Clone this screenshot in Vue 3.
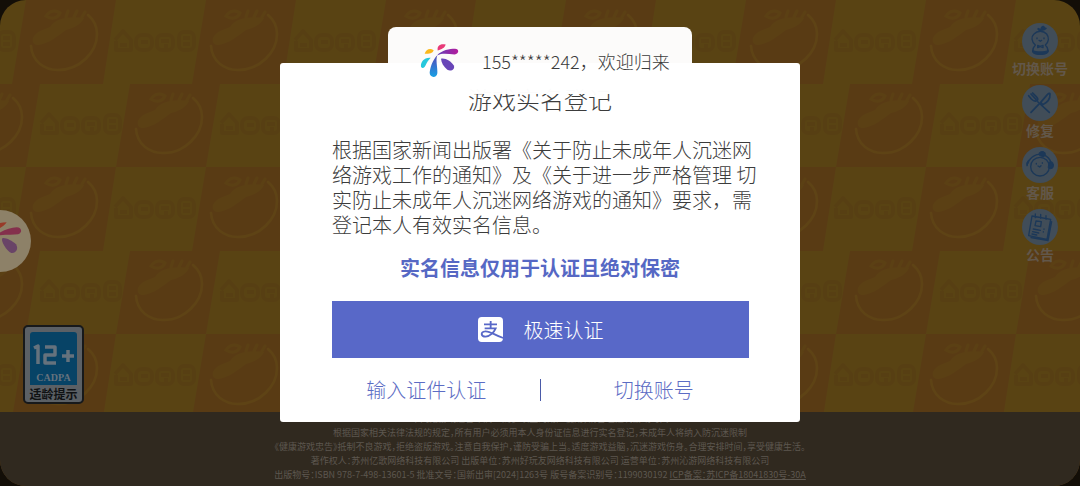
<script setup>
const copyText = [
  '根据国家新闻出版署《关于防止未成年人沉迷网',
  '络游戏工作的通知》及《关于进一步严格管理 切',
  '实防止未成年人沉迷网络游戏的通知》要求\uFF0C需',
  '登记本人有效实名信息。',
].join('\n')

const legalLines = [
  '本网络游戏适合年满12周岁以上的用户使用\uFF0C请合理控制游戏时间',
  '根据国家相关法律法规的规定\uFF0C所有用户必须用本人身份证信息进行实名登记\uFF0C未成年人将纳入防沉迷限制',
  '《健康游戏忠告》抵制不良游戏\uFF0C拒绝盗版游戏。注意自我保护\uFF0C谨防受骗上当。适度游戏益脑\uFF0C沉迷游戏伤身。合理安排时间\uFF0C享受健康生活。',
  '著作权人\uFF1A苏州亿歌网络科技有限公司 出版单位\uFF1A苏州好玩友网络科技有限公司 运营单位\uFF1A苏州沁游网络科技有限公司',
]

const menu = [
  { id: 'account', label: '切换账号' },
  { id: 'repair', label: '修复' },
  { id: 'service', label: '客服' },
  { id: 'notice', label: '公告' },
]
</script>

<template>
  <div class="page">
    <div class="screen">
      <svg class="wallpaper" width="100%" height="100%" aria-hidden="true">
        <defs>
          <g id="bowl" fill="none" stroke="#5e4315" stroke-width="2.5" stroke-linecap="round">
            <path d="M31 46C32 61 44 70 58 70C80 70 97 52 97 34C97 26 94 20 88 15" />
            <path d="M33 38C36 31 44 30 50 27C56 18 70 16 84 18C80 26 72 28 66 30C58 36 48 44 38 45C34 45 32 42 33 38Z" fill="#5b4014" stroke="none" />
            <path d="M46 16C50 10 56 10 60 13C58 18 52 20 46 16ZM66 17L68 11M74 17L77 11M82 17L85 12" stroke="#5b4014" stroke-width="3" />
          </g>
          <g id="stamps" fill="none" stroke="#573f13" stroke-width="4" stroke-linejoin="round">
            <path d="M115 40L123 31L131 40V50H116V41M120 45H127" />
            <rect x="136" y="35" width="16" height="15" rx="6" />
            <path d="M141 42H148" />
            <rect x="157" y="35" width="16" height="15" rx="5" />
            <path d="M161 41H169M164 46H168" />
            <rect x="179" y="32" width="15" height="18" rx="5" />
            <path d="M183 38H190M183 44H190" />
          </g>
          <pattern id="checker" width="180" height="167" patternUnits="userSpaceOnUse">
            <rect width="180" height="167" fill="#594313" />
            <path d="M26 0H116L103 84H12ZM-50 84H40L26 167H-64ZM130 84H220L206 167H116Z" fill="#593b14" />
            <use href="#bowl" />
            <use href="#bowl" x="105" y="83" />
            <use href="#bowl" x="-75" y="83" />
            <use href="#stamps" />
            <use href="#stamps" x="-180" />
            <use href="#stamps" x="-74" y="83" />
          </pattern>
        </defs>
        <rect width="100%" height="100%" fill="url(#checker)" />
      </svg>

      <main class="stage">
        <div class="rating">
          <div class="rating-blue">
            <svg class="rating-age" viewBox="0 0 42 22" role="img" aria-label="12+">
              <path d="M1 4L5 2V20M12 3H22V11H12V19H23M29 12H41M35 6V18" fill="none" stroke="#65727d" stroke-width="3.5" stroke-linejoin="round" />
            </svg>
            <span class="rating-org">CADPA</span>
          </div>
          <span class="rating-tip">适龄提示</span>
        </div>

        <nav class="menu">
          <button v-for="item in menu" :key="item.id" class="menu-item" type="button">
            <svg class="menu-icon" viewBox="0 0 108 108" fill="none" stroke="#1c3858" stroke-width="4" stroke-linecap="round" stroke-linejoin="round" aria-hidden="true">
              <circle cx="54" cy="54" r="54" fill="#414d58" stroke="none" />
              <g v-if="item.id === 'account'">
                <path d="M55 24C47 24 44 17 48 14C51 15 54 16 55 18C56 10 62 6 66 9C69 12 71 15 75 15C73 21 64 24 55 24Z" fill="#1c3858" stroke="none" />
                <path d="M40 66C28 56 27 41 36 33C46 22 64 22 74 33C82 43 81 57 70 66C77 72 78 80 78 86M40 66C34 72 32 78 32 86" />
                <path d="M30 80C44 86 66 86 80 80C81 90 74 96 55 96C36 96 29 90 30 80Z" fill="#1c3858" stroke="none" />
                <path d="M45 45V47M66 45V47M51 52L55 55L59 52M47 67L63 74V67L47 74Z" />
              </g>
              <g v-else-if="item.id === 'repair'" stroke-width="5">
                <path d="M32 24L44 36C50 43 47 48 43 48C38 50 33 47 28 42L20 32M27 27L42 43M48 51L82 82M50 58L27 82M56 52L76 29C80 25 84 23 84 27C85 41 75 53 62 59Z" />
              </g>
              <g v-else-if="item.id === 'service'">
                <circle cx="54" cy="59" r="28" />
                <path d="M18 49C24 28 45 18 65 24C77 28 84 37 87 47M24 38C19 40 15 46 16 54" />
                <path d="M82 46C90 42 97 52 93 60C90 67 81 66 79 61ZM54 25C47 21 56 12 65 15C73 18 70 27 63 29Z" fill="#1c3858" />
                <path d="M43 49V51M61 47V49M48 57L53 60L57 56M15 48V56" />
              </g>
              <g v-else>
                <path d="M30 21L86 31L75 91L20 80ZM27 86L78 95L89 38M40 15V26M56 16V28M72 20V31" />
                <path d="M42 36L58 38L56 53L39 50ZM34 60L55 64M32 68L50 72M66 60V61M64 68V69M30 75L44 78" />
              </g>
            </svg>
            <span class="menu-label">{{ item.label }}</span>
          </button>
        </nav>
      </main>

      <footer class="legal">
        <p v-for="line in legalLines" :key="line">{{ line }}</p>
        <p>出版物号&#xFF1A;ISBN 978-7-498-13601-5 批准文号&#xFF1A;国新出审[2024]1263号 版号备案识别号&#xFF1A;1199030192 <a href="#">ICP备案&#xFF1A;苏ICP备18041830号-30A</a></p>
      </footer>
    </div>

    <button class="floating" type="button" aria-label="菜单">
      <svg viewBox="-93 31 186 186" aria-hidden="true">
        <circle cx="0" cy="124" r="93" fill="#8d8168" />
        <path d="M-30 96C-20 78 -8 68 20 68C12 80 2 86 -16 90Z" fill="#983a28" />
        <path d="M-24 113C0 96 28 84 50 83C66 83 68 100 54 104C34 107 4 101 -24 113Z" fill="#84304c" />
        <path d="M7 116C13 112 36 122 48 134C57 148 47 162 34 160C20 155 1 123 7 116Z" fill="#694467" />
      </svg>
    </button>

    <div class="backdrop">
      <section class="dialog" role="dialog" aria-modal="true" aria-labelledby="dialog-title">
        <span class="close-edge" aria-hidden="true"></span>
        <span class="panel-edge" aria-hidden="true"></span>
        <h1 id="dialog-title">游戏实名登记</h1>
        <p class="copy">{{ copyText }}</p>
        <p class="hint">实名信息仅用于认证且绝对保密</p>
        <button class="primary" type="button">
          <svg viewBox="0 0 75 75" aria-hidden="true">
            <rect width="75" height="75" rx="11" fill="#fff" />
            <path d="M18 22H57M38 12V34M20 34H53C48 46 36 58 23 59C8 59 7 44 21 43C36 41 50 55 76 63" fill="none" stroke="#5868c8" stroke-width="5.5" />
          </svg>
          <span>极速认证</span>
        </button>
        <div class="choices">
          <button type="button">输入证件认证</button>
          <i class="divider"></i>
          <button type="button">切换账号</button>
        </div>
      </section>

      <div class="toast" role="status">
        <svg viewBox="450 100 117 104" aria-hidden="true">
          <defs>
            <linearGradient id="petal-blue" x1="0" y1="0" x2="0" y2="1">
              <stop offset="0" stop-color="#5547b8" />
              <stop offset="1" stop-color="#18a0e4" />
            </linearGradient>
            <linearGradient id="petal-pink" x1="0" y1="0" x2="1" y2="0">
              <stop offset="0" stop-color="#6040b8" />
              <stop offset="1" stop-color="#b41a9c" />
            </linearGradient>
          </defs>
          <path d="M503 122C501 108 509 101 527 104C524 115 515 118 503 122Z" fill="#e83a78" />
          <path d="M464 132C468 119 479 113 491 121C488 131 478 131 464 132Z" fill="#fbb81c" />
          <path d="M482 144C463 142 451 156 453 171C458 179 465 172 468 164C471 157 476 151 482 144Z" fill="#26c8dc" />
          <path d="M502 136C488 149 480 174 479 189C479 205 501 205 502 190C503 171 496 150 502 136Z" fill="url(#petal-blue)" />
          <path d="M501 137C515 121 539 117 555 117C569 117 567 133 554 134C535 133 518 128 501 137Z" fill="url(#petal-pink)" />
          <path d="M513 147C525 143 543 155 551 166C557 177 543 187 532 180C521 171 514 159 513 147Z" fill="#6846b8" />
        </svg>
        <span>155*****242&#xFF0C;欢迎归来</span>
      </div>
    </div>
  </div>
</template>

<style>
body {
  background: #130e07;
}
</style>

<style scoped>
.page {
  position: relative;
  min-height: 100vh;
  display: flex;
  overflow: hidden;
  font-family: "Noto Sans CJK SC", "Liberation Sans", sans-serif;
}
.page *,
.page {
  box-sizing: border-box;
}
button {
  border: 0;
  padding: 0;
  background: none;
  font: inherit;
  color: inherit;
  cursor: pointer;
}
svg {
  display: block;
  flex: none;
}
p,
h1 {
  margin: 0;
}
.screen {
  position: relative;
  flex: 1;
  display: flex;
  flex-direction: column;
  border-radius: 26px;
  overflow: hidden;
}
.wallpaper {
  position: absolute;
  inset: 0;
}
.stage {
  position: relative;
  flex: 1;
  display: flex;
  justify-content: space-between;
  align-items: flex-start;
  padding: 23px 12px 8px 23px;
}
.rating {
  align-self: flex-end;
  width: 61px;
  padding: 5px 5px 0;
  border: 2px solid #17191b;
  border-radius: 5px;
  background: #5b6065;
  display: flex;
  flex-direction: column;
  align-items: center;
}
.rating-blue {
  align-self: stretch;
  height: 53px;
  border-radius: 3px 3px 0 0;
  background: #074366;
  display: flex;
  flex-direction: column;
  align-items: center;
  justify-content: flex-end;
  gap: 5px;
}
.rating-age {
  width: 42px;
  height: 22px;
}
.rating-org {
  font: bold 10px/14px "Liberation Serif", serif;
  color: #65727d;
}
.rating-tip {
  font-size: 12px;
  line-height: 17px;
  font-weight: bold;
  color: #101214;
  white-space: nowrap;
}
.menu {
  display: flex;
  flex-direction: column;
  gap: 8px;
}
.menu-item {
  display: flex;
  flex-direction: column;
  align-items: center;
}
.menu-icon {
  width: 36px;
  height: 36px;
}
.menu-label {
  font-size: 14px;
  line-height: 18px;
  font-weight: bold;
  color: #62574a;
}
.legal {
  position: relative;
  padding-bottom: 4px;
  background: #30291f;
  color: #5d574f;
  font-size: 9px;
  line-height: 14px;
  font-feature-settings: "halt";
  text-align: center;
}
.legal a {
  color: inherit;
}
.floating {
  position: absolute;
  left: -31px;
  top: 210px;
  width: 62px;
  height: 62px;
}
.backdrop {
  position: absolute;
  inset: 0;
  display: flex;
  justify-content: center;
  align-items: flex-start;
  padding-top: 63px;
}
.dialog {
  position: relative;
  width: 520px;
  max-width: 94%;
  padding: 24px 33px 16px;
  border-radius: 3px;
  background: #fff;
  color: #3c3c3c;
  display: flex;
  flex-direction: column;
}
.close-edge {
  position: absolute;
  z-index: -1;
  top: 33px;
  right: -2px;
  width: 10px;
  height: 10px;
  border-radius: 50%;
  background: #d8d0c4;
}
.panel-edge {
  position: absolute;
  z-index: -1;
  top: 28px;
  bottom: 32px;
  left: -1px;
  width: 8px;
  border-radius: 4px;
  background: linear-gradient(#d8a02c 0 20px, #c4beb4 20px);
}
h1 {
  font-size: 24px;
  line-height: 24px;
  font-weight: 300;
  text-align: center;
}
.copy {
  margin: 26px 0 0 19px;
  font-size: 20px;
  line-height: 25px;
  font-weight: 300;
  white-space: pre;
}
.hint {
  margin-top: 18px;
  font-size: 20px;
  line-height: 26px;
  font-weight: bold;
  text-align: center;
  color: #5668c4;
}
.primary {
  margin: 20px 18px 0 19px;
  height: 57px;
  display: flex;
  align-items: center;
  justify-content: center;
  gap: 21px;
  background: #5868c8;
  color: #fff;
  font-size: 20px;
  font-weight: 300;
}
.primary svg {
  width: 25px;
  height: 25px;
}
.choices {
  margin-top: 16px;
  display: flex;
  align-items: center;
  color: #5c6cc4;
  font-size: 20px;
  line-height: 32px;
  font-weight: 300;
}
.choices button {
  flex: 1;
}
.divider {
  width: 1px;
  height: 22px;
  background: #4a5aa8;
}
.toast {
  position: absolute;
  top: 27px;
  width: 304px;
  height: 67px;
  padding-left: 32px;
  display: flex;
  align-items: center;
  gap: 23px;
  border-radius: 8px;
  background: rgba(255, 255, 255, 0.98);
  color: #3c3c3c;
  font-size: 18px;
  font-weight: 300;
  white-space: nowrap;
}
.toast svg {
  width: 39px;
  height: 35px;
}
</style>
